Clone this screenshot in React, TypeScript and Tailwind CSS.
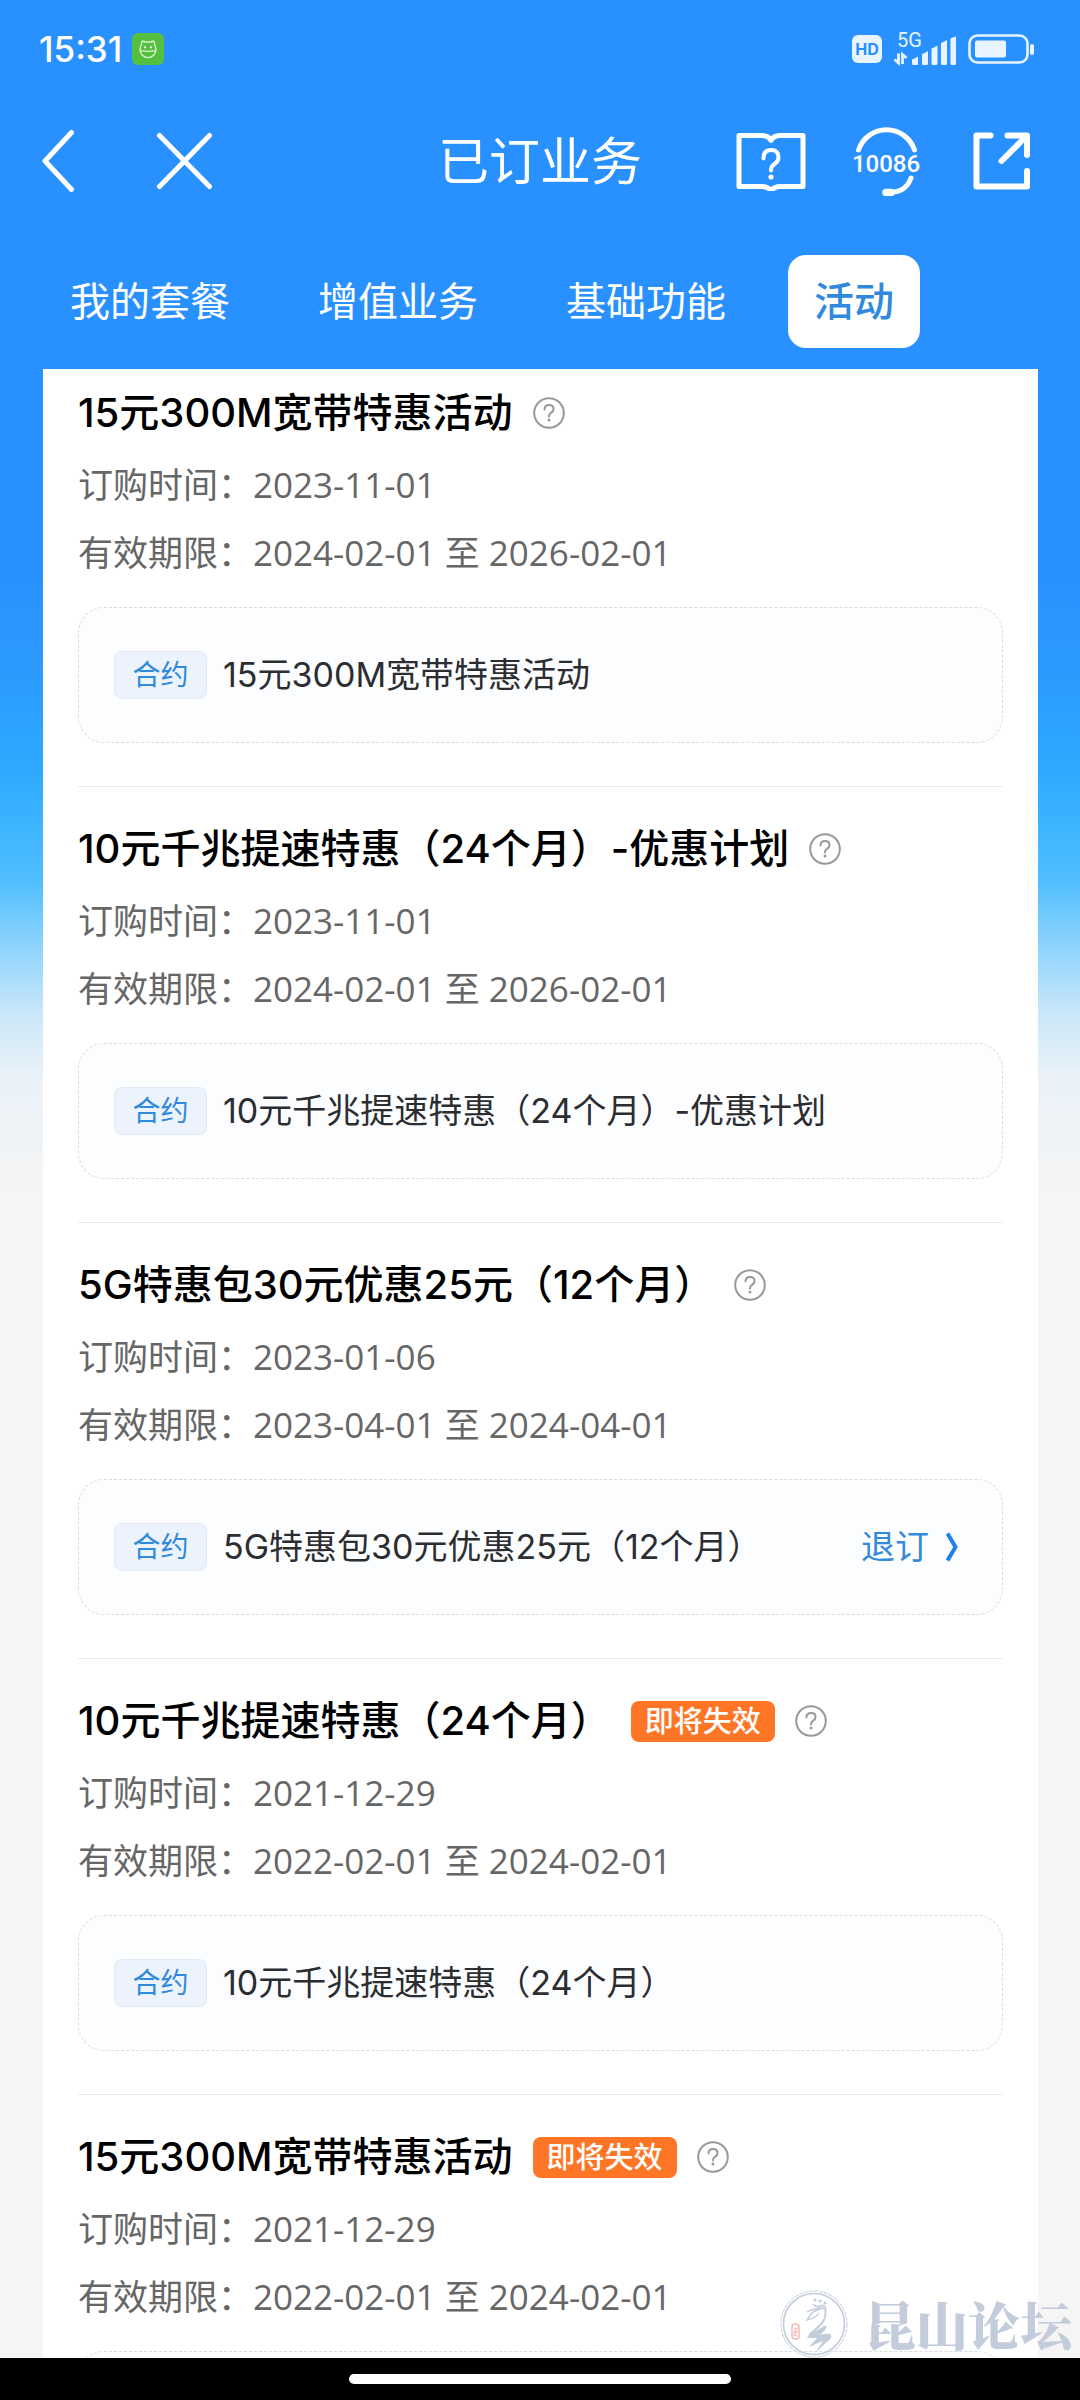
import { useState } from 'react'
import clsx from 'clsx'

interface Activity {
  id: number
  name: string
  orderedAt: string
  from: string
  to: string
  expiring?: boolean
  cancellable?: boolean
}

const tabs = ['我的套餐', '增值业务', '基础功能', '活动']

const activities: Activity[] = [
  { id: 1, name: '15元300M宽带特惠活动', orderedAt: '2023-11-01', from: '2024-02-01', to: '2026-02-01' },
  { id: 2, name: '10元千兆提速特惠（24个月）-优惠计划', orderedAt: '2023-11-01', from: '2024-02-01', to: '2026-02-01' },
  { id: 3, name: '5G特惠包30元优惠25元（12个月）', orderedAt: '2023-01-06', from: '2023-04-01', to: '2024-04-01', cancellable: true },
  { id: 4, name: '10元千兆提速特惠（24个月）', orderedAt: '2021-12-29', from: '2022-02-01', to: '2024-02-01', expiring: true },
  { id: 5, name: '15元300M宽带特惠活动', orderedAt: '2021-12-29', from: '2022-02-01', to: '2024-02-01', expiring: true },
]

function StatusBar() {
  return (
    <div className="flex h-[98px] items-center justify-between pl-[39px] pr-[45px] text-white">
      <div className="flex items-center gap-[10px]">
        <span className="text-[35px] leading-none font-medium">15:31</span>
        <svg className="size-8" viewBox="0 0 32 32" fill="none" stroke="#d8f5c8" strokeWidth="1.4">
          <rect width="32" height="32" rx="6" fill="#55bf3f" stroke="none" />
          <path d="M9.5 11.5 9.8 8.8q1.7-1.6 2.8.2h6.8q1.1-1.8 2.8-.2l.3 2.7q1.400 2.300 1.400 5.200a7.900 7.900 0 0 1-15.800 0q0-2.900 1.400-5.200Z" />
          <path d="M8.4 17.6q7.6 1.6 15.2 0" />
          <path d="M13 13.2v2M19 13.2v2" strokeWidth="2.2" />
        </svg>
      </div>
      <div className="flex items-center">
        <span className="flex h-7 w-[30px] items-center justify-center rounded-md bg-[#e8f4ff] text-[16px] leading-none font-bold text-[#2990ff]">
          HD
        </span>
        <svg className="ml-[10px] h-8 w-[66px] overflow-visible" viewBox="0 0 66 32" fill="#e8f4ff">
          <text x="5" y="14" fontSize="20" fontFamily="Roboto, sans-serif">5G</text>
          <path d="M20 26.5q3-1 6-3V32h-4.500q-1.500 0-1.500-1.500ZM30 21q3-1 6-3v12.500q0 1.500-1.500 1.500h-3q-1.500 0-1.500-1.500ZM39.500 15.500q3-1 6-3v18q0 1.500-1.500 1.500h-3q-1.500 0-1.500-1.500ZM49 10q3-1 6-3v23.500q0 1.500-1.500 1.500h-3q-1.500 0-1.500-1.500ZM58.500 5.500q3-1.500 5.500-2v27q0 1.500-1.500 1.500h-2.500q-1.500 0-1.500-1.500Z" />
          <path d="M6.500 20.500v9.500l-4-3.500M10.500 31v-9.500l4 3.500" fill="none" stroke="#e8f4ff" strokeWidth="2.800" />
        </svg>
        <svg className="ml-[10px] h-[30px] w-[67px]" viewBox="0 0 67 30" fill="none">
          <rect x="1.500" y="1.500" width="58" height="27" rx="8" stroke="#e8f4ff" strokeWidth="2.600" />
          <rect x="7" y="6.500" width="31" height="17" rx="2" fill="#e8f4ff" />
          <rect x="62" y="10" width="4" height="11" rx="2" fill="#e8f4ff" />
        </svg>
      </div>
    </div>
  )
}

function TitleBar() {
  return (
    <div className="grid h-[126px] grid-cols-[1fr_auto_1fr] items-center px-[42px] text-white">
      <div className="flex items-center gap-[82px]">
        <button type="button" aria-label="返回">
          <svg className="h-16 w-8" viewBox="0 0 32 64" fill="none" stroke="currentColor" strokeWidth="5" strokeLinecap="round" strokeLinejoin="round">
            <path d="M29.500 3.500 3 32l26.500 28.500" />
          </svg>
        </button>
        <button type="button" aria-label="关闭">
          <svg className="h-16 w-14" viewBox="0 0 56 64" fill="none" stroke="currentColor" strokeWidth="5" strokeLinecap="round">
            <path d="M3.500 6.500l50 51M53.500 6.500l-50 51" />
          </svg>
        </button>
      </div>
      <h1 className="text-[51px] leading-none">已订业务</h1>
      <div className="flex items-center justify-end gap-[46px]">
        <button type="button" aria-label="帮助">
          <svg className="h-[60px] w-[70px]" viewBox="0 0 70 60" fill="none" stroke="currentColor" strokeWidth="5" strokeLinejoin="round">
            <path d="M3 4.500h23q6.500 0 9 5 2.500-5 9-5h23v51H44q-5.500 0-9 4-3.500-4-9-4H3Z" />
            <path d="M27.500 27.500q0-8.500 7.500-8.500t7.500 7.500q0 4-4 6.500-3.500 2.200-3.500 6.500" strokeWidth="4" strokeLinecap="round" />
            <circle cx="35" cy="46" r="2.600" fill="currentColor" stroke="none" />
          </svg>
        </button>
        <button type="button" aria-label="客服">
          <svg className="h-[70px] w-[68px]" viewBox="0 0 68 70" fill="none" stroke="currentColor" strokeWidth="5" strokeLinecap="round">
            <path d="M6.500 24A29.500 29.500 0 0 1 62.500 24" />
            <path d="M59 52Q54 66 38 66.500" />
            <path d="M34 66.500h5" strokeWidth="7.500" />
            <text x="34" y="46" fontSize="24" fontWeight="500" fontFamily="Roboto, sans-serif" textAnchor="middle" fill="currentColor" stroke="none">10086</text>
          </svg>
        </button>
        <button type="button" aria-label="分享">
          <svg className="h-[58px] w-[72px]" viewBox="0 0 72 58" fill="none" stroke="currentColor" strokeWidth="6" strokeLinecap="round" strokeLinejoin="round">
            <path d="M24.500 3.500H10.500v51h50.500V39" />
            <path d="M41.500 3.500H61V23" />
            <path d="M60 4.500 35.500 29" />
          </svg>
        </button>
      </div>
    </div>
  )
}

function HelpButton() {
  return (
    <button type="button" aria-label="说明" className="shrink-0">
      <svg className="size-8" viewBox="0 0 32 32" fill="none" stroke="#999" strokeWidth="2" strokeLinecap="round">
        <circle cx="16" cy="16" r="14.800" />
        <path d="M11.500 12.500q0-4.500 4.500-4.500t4.500 4q0 2.200-2.300 3.700-2.200 1.500-2.200 3.800" />
        <circle cx="16" cy="23" r="1.500" fill="#999" stroke="none" />
      </svg>
    </button>
  )
}

function ActivityItem({ activity }: { activity: Activity }) {
  return (
    <li className="border-b border-[#ebebeb] pt-8 pb-[43px] first:pt-[14px] last:border-b-0">
      <div className="flex h-[60px] items-center gap-5">
        <h2 className="text-[40px] leading-none font-medium whitespace-nowrap text-black">{activity.name}</h2>
        {activity.expiring && (
          <span className="flex h-[41px] shrink-0 items-center rounded-lg bg-[#ff7526] px-[14px] text-[29px] leading-none font-medium text-white">
            即将失效
          </span>
        )}
        <HelpButton />
      </div>
      <div className="mt-2 font-['Open_Sans','Noto_Sans_CJK_SC',sans-serif] text-[35px] leading-[68px] text-[#666]">
        <p>订购时间：{activity.orderedAt}</p>
        <p>
          有效期限：{activity.from} 至 {activity.to}
        </p>
      </div>
      <div className="mt-5 flex h-[136px] items-center rounded-[26px] border border-dashed border-[#d9dce0] bg-[#fbfdff] pr-[43px] pl-[35px]">
        <span className="flex h-12 w-[93px] shrink-0 items-center justify-center rounded-lg border border-[#e2e9f6] bg-[#edf3fd] text-[28px] leading-none text-[#2f8ade]">
          合约
        </span>
        <span className="ml-4 text-[34px] leading-none whitespace-nowrap text-[#2c2d30]">{activity.name}</span>
        {activity.cancellable && (
          <button type="button" className="ml-auto flex items-center gap-4 text-[34px] leading-none text-[#3389dc]">
            退订
            <svg className="h-[30px] w-[14px]" viewBox="0 0 14 30" fill="none" stroke="#1e80f0" strokeWidth="4">
              <path d="M2.500 1.500 10.500 15l-8 13.500" />
            </svg>
          </button>
        )}
      </div>
    </li>
  )
}

function Watermark() {
  return (
    <div className="pointer-events-none absolute right-2 bottom-0 flex items-center gap-4">
      <svg className="size-[68px]" viewBox="0 0 68 68" fill="none" stroke="#c3ccda">
        <circle cx="34" cy="34" r="33" strokeWidth="1" strokeDasharray="4 1" />
        <circle cx="34" cy="34" r="30.500" strokeWidth="1.600" />
        {/* dancer: hair ornament, face and sleeve */}
        <circle cx="35" cy="10" r="1.600" fill="#c3ccda" stroke="none" />
        <circle cx="40" cy="11" r="1.600" fill="#c3ccda" stroke="none" />
        <circle cx="45" cy="13" r="1.600" fill="#c3ccda" stroke="none" />
        <path d="M33 14q4 4 7 2t6 2" strokeWidth="1.600" />
        <path d="M27 22q7-4 17-4-9 2-13 6l-4 6q9-2 12-7" strokeWidth="1.400" />
        <path d="M45 18q2 9-3 15T29 45" strokeWidth="2" />
        <path d="M27 48q2-5 9-7l8-5q4-1 2 3l-6 6q6-2 10-1 3 2-1 6L35 63l8-12-14 6 8-9Z" fill="#c3ccda" stroke="none" />
        <rect x="12" y="34" width="7" height="15" rx="3" stroke="#f3b8b8" strokeWidth="1.500" />
        <path d="m14 38 3 1-3 3h3l-3 3 3 1" stroke="#f3b8b8" strokeWidth="1.200" />
      </svg>
      <span className="font-['Noto_Serif_CJK_SC','Noto_Sans_CJK_SC',serif] text-[52px] leading-none font-black text-[#c3ccda]">
        昆山论坛
      </span>
    </div>
  )
}

export default function App() {
  const [activeTab, setActiveTab] = useState('活动')

  return (
    <div className="flex h-screen flex-col bg-[#f5f5f5] bg-[linear-gradient(#2990ff_560px,#2c9bff_680px,#2daaff_770px,#50beff_880px,#91d5fc_950px,#cfe9f9_1020px,#eaf2f8_1080px,#f5f5f5_1190px)] font-['Inter','Noto_Sans_CJK_SC',sans-serif]">
      <header>
        <StatusBar />
        <TitleBar />
        <div role="tablist" className="flex gap-9 pt-[31px] pb-[21px] pl-11">
          {tabs.map((tab) => (
            <button
              key={tab}
              type="button"
              role="tab"
              aria-selected={tab === activeTab}
              onClick={() => setActiveTab(tab)}
              className={clsx(
                'h-[93px] rounded-[18px] px-[26px] text-[40px] leading-none whitespace-nowrap',
                tab === activeTab ? 'bg-white font-medium text-[#2f8ade]' : 'text-white',
              )}
            >
              {tab}
            </button>
          ))}
        </div>
      </header>

      <div className="relative min-h-0 flex-1">
        <main className="h-full overflow-y-auto [scrollbar-width:none]">
          <ul className="mr-[42px] ml-[43px] bg-white px-[35px]">
            {activities.map((activity) => (
              <ActivityItem key={activity.id} activity={activity} />
            ))}
          </ul>
        </main>
        <Watermark />
      </div>

      <footer className="flex h-[42px] shrink-0 items-center justify-center bg-black">
        <div className="h-[10px] w-[382px] rounded-full bg-white" />
      </footer>
    </div>
  )
}
